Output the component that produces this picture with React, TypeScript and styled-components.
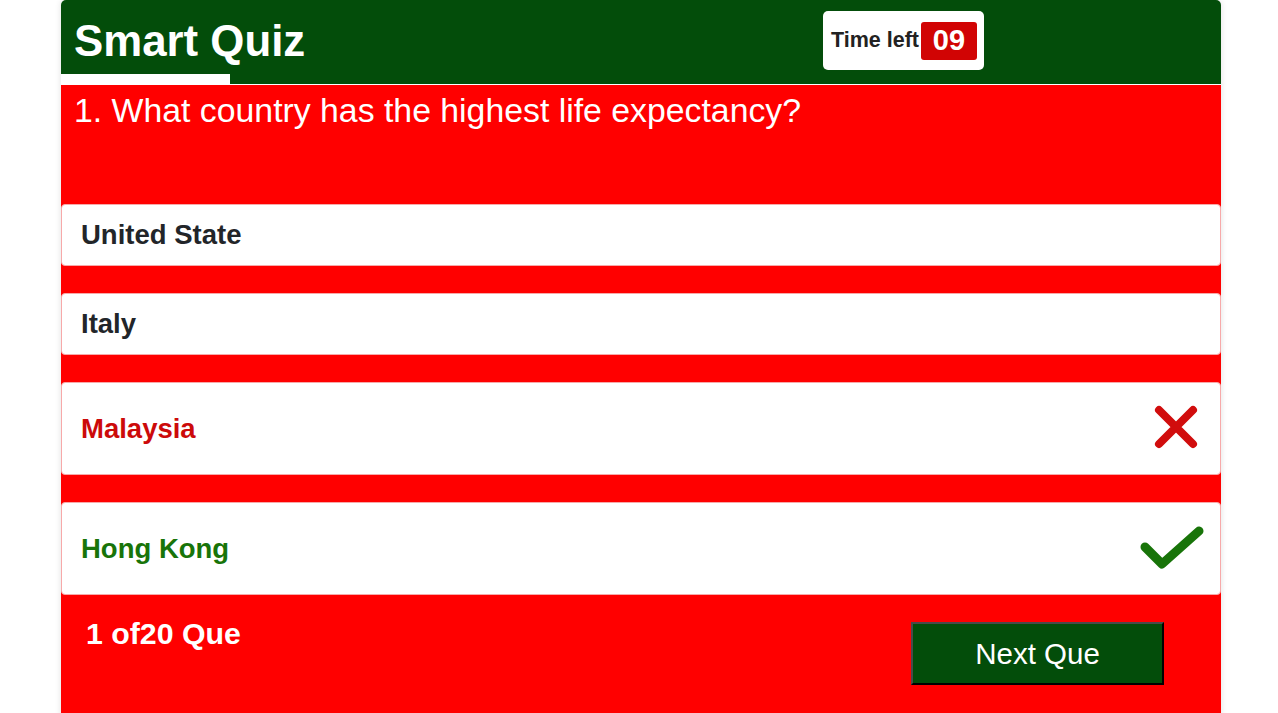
import React from "react";
import styled, { createGlobalStyle } from "styled-components";

const GlobalStyle = createGlobalStyle`
  html, body {
    margin: 0;
    padding: 0;
    background: #ffffff;
    font-family: "Liberation Sans", Arial, sans-serif;
  }
  * { box-sizing: border-box; }
`;

const Container = styled.div`
  width: 1160px;
  margin-left: 61px;
  border-radius: 5px 5px 0 0;
  overflow: hidden;
  box-shadow: 0 0 6px rgba(0, 0, 0, 0.12);
`;

const Header = styled.header`
  position: relative;
  height: 85px;
  padding: 0 14px 3px 13px;
  display: flex;
  align-items: center;
  background: #034d0a;
  border-bottom: 1px solid #ffffff;
`;

const Title = styled.h1`
  margin: 0;
  font-size: 43.8px;
  font-weight: 700;
  color: #ffffff;
  line-height: 1;
`;

const Timer = styled.div`
  margin-left: auto;
  margin-right: 223px;
  height: 59px;
  padding: 0 7px 0 8px;
  display: flex;
  align-items: center;
  gap: 2px;
  background: #ffffff;
  border-radius: 5px;
`;

const TimerLabel = styled.span`
  font-size: 21.5px;
  font-weight: 700;
  color: #222222;
`;

const TimerValue = styled.span`
  width: 56px;
  height: 38px;
  display: flex;
  align-items: center;
  justify-content: center;
  background: #d10404;
  border-radius: 3px;
  color: #ffffff;
  font-size: 29px;
  font-weight: 700;
`;

const Progress = styled.div`
  position: absolute;
  left: 0;
  bottom: 0;
  height: 10px;
  background: #ffffff;
`;

const Body = styled.section`
  background: #ff0000;
  padding-bottom: 60px;
`;

const Question = styled.h2`
  margin: 0;
  padding: 6px 14px 0 13px;
  height: 119px;
  font-size: 33.8px;
  font-weight: 400;
  color: #ffffff;
`;

const OptionList = styled.div`
  display: flex;
  flex-direction: column;
  gap: 27px;
`;

const Option = styled.div<{ $state?: "wrong" | "right" }>`
  display: flex;
  align-items: center;
  justify-content: space-between;
  min-height: ${(p) => (p.$state ? "93px" : "62px")};
  padding: 0 16px 0 19px;
  background: #ffffff;
  border: 1px solid #f7a9a9;
  border-radius: 4px;
  font-size: 27.5px;
  font-weight: 700;
  color: ${(p) =>
    p.$state === "wrong" ? "#cc0a0a" : p.$state === "right" ? "#187409" : "#222529"};
`;

const Icon = styled.svg<{ $right?: number; $top?: number }>`
  display: block;
  flex: 0 0 auto;
  margin-right: ${(p) => p.$right ?? 0}px;
  margin-top: ${(p) => p.$top ?? 0}px;
`;

const Footer = styled.div`
  display: flex;
  align-items: flex-start;
  justify-content: space-between;
  padding: 22px 57px 0 25px;
`;

const Counter = styled.span`
  font-size: 30.3px;
  font-weight: 700;
  color: #ffffff;
`;

const NextButton = styled.button`
  margin-top: 5px;
  width: 253px;
  height: 63px;
  background: #034d0a;
  color: #ffffff;
  font-family: "Liberation Sans", Arial, sans-serif;
  font-size: 29.5px;
  border-style: solid;
  border-width: 2px;
  border-color: #4a4a4a #000000 #000000 #4a4a4a;
  padding: 0;
  cursor: pointer;
`;

const CrossIcon = () => (
  <Icon $right={6} $top={-3} width="44" height="44" viewBox="0 0 44 44">
    <path
      d="M5 5 L39 39 M39 5 L5 39"
      stroke="#d10d0d"
      strokeWidth="8"
      strokeLinecap="round"
      fill="none"
    />
  </Icon>
);

const CheckIcon = () => (
  <Icon $top={1} width="64" height="46" viewBox="0 0 64 46">
    <path
      d="M5 21 L22 38 L59 5"
      stroke="#187409"
      strokeWidth="9"
      strokeLinecap="round"
      strokeLinejoin="round"
      fill="none"
    />
  </Icon>
);

const options: { text: string; state?: "wrong" | "right" }[] = [
  { text: "United State" },
  { text: "Italy" },
  { text: "Malaysia", state: "wrong" },
  { text: "Hong Kong", state: "right" },
];

export default function App() {
  const progress = (169 / 1160) * 100;
  return (
    <>
      <GlobalStyle />
      <Container>
        <Header>
          <Title>Smart Quiz</Title>
          <Timer>
            <TimerLabel>Time left</TimerLabel>
            <TimerValue>09</TimerValue>
          </Timer>
          <Progress style={{ width: `${progress}%` }} />
        </Header>
        <Body>
          <Question>1. What country has the highest life expectancy?</Question>
          <OptionList>
            {options.map((o) => (
              <Option key={o.text} $state={o.state}>
                <span>{o.text}</span>
                {o.state === "wrong" && <CrossIcon />}
                {o.state === "right" && <CheckIcon />}
              </Option>
            ))}
          </OptionList>
          <Footer>
            <Counter>1 of20 Que</Counter>
            <NextButton>Next Que</NextButton>
          </Footer>
        </Body>
      </Container>
    </>
  );
}
